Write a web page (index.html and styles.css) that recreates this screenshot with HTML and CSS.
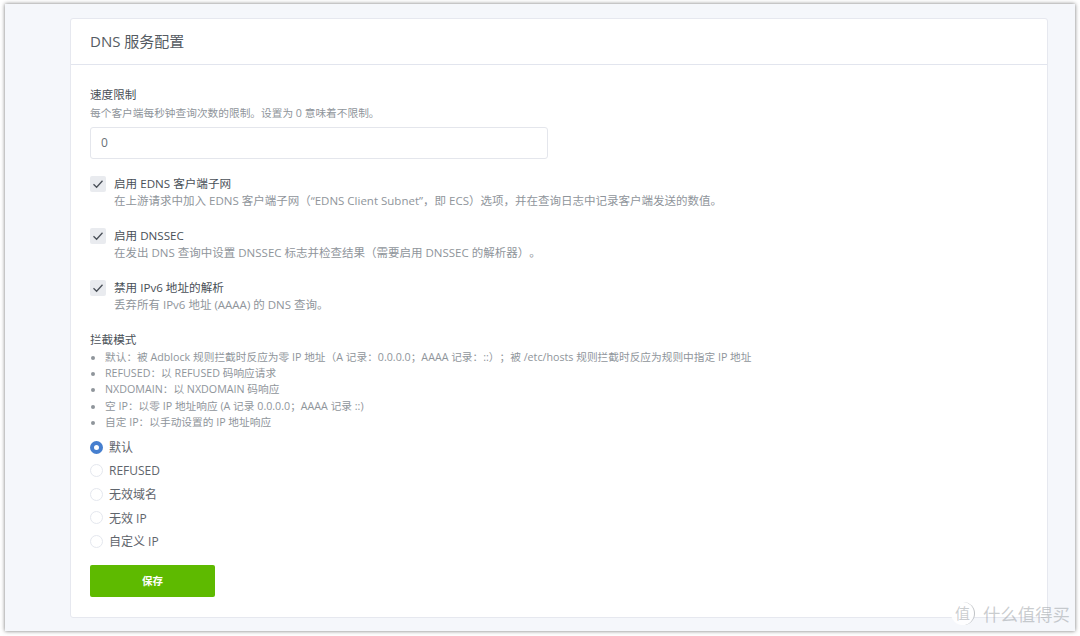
FILE: index.html
```html
<!DOCTYPE html>
<html lang="zh-CN">
<head>
<meta charset="utf-8">
<title>DNS 服务配置</title>
<link rel="stylesheet" href="styles.css">
</head>
<body>
<div class="frame">
  <section class="card">
    <h1 class="card-title">DNS 服务配置</h1>
    <form class="card-body">
      <div class="field">
        <div class="label">速度限制</div>
        <div class="desc">每个客户端每秒钟查询次数的限制。设置为 0 意味着不限制。</div>
        <div class="input">0</div>
      </div>
      <div class="check first">
        <span class="box"><svg width="12" height="12" viewBox="0 0 12 12"><path d="M1.5 6.3 4.6 9.3 10.5 2.8" fill="none" stroke="#4a5058" stroke-width="1.3"/></svg></span>
        <div>
          <div class="label">启用 EDNS 客户端子网</div>
          <div class="desc">在上游请求中加入 EDNS 客户端子网（“EDNS Client Subnet”，即 ECS）选项，并在查询日志中记录客户端发送的数值。</div>
        </div>
      </div>
      <div class="check">
        <span class="box"><svg width="12" height="12" viewBox="0 0 12 12"><path d="M1.5 6.3 4.6 9.3 10.5 2.8" fill="none" stroke="#4a5058" stroke-width="1.3"/></svg></span>
        <div>
          <div class="label">启用 DNSSEC</div>
          <div class="desc">在发出 DNS 查询中设置 DNSSEC 标志并检查结果（需要启用 DNSSEC 的解析器）。</div>
        </div>
      </div>
      <div class="check">
        <span class="box"><svg width="12" height="12" viewBox="0 0 12 12"><path d="M1.5 6.3 4.6 9.3 10.5 2.8" fill="none" stroke="#4a5058" stroke-width="1.3"/></svg></span>
        <div>
          <div class="label">禁用 IPv6 地址的解析</div>
          <div class="desc">丢弃所有 IPv6 地址 (AAAA) 的 DNS 查询。</div>
        </div>
      </div>
      <div class="mode">
        <div class="label">拦截模式</div>
        <ul class="modes">
          <li>默认：被 Adblock 规则拦截时反应为零 IP 地址（A 记录：0.0.0.0；AAAA 记录：::）；被 /etc/hosts 规则拦截时反应为规则中指定 IP 地址</li>
          <li>REFUSED：以 REFUSED 码响应请求</li>
          <li>NXDOMAIN：以 NXDOMAIN 码响应</li>
          <li>空 IP：以零 IP 地址响应 (A 记录 0.0.0.0；AAAA 记录 ::)</li>
          <li>自定 IP：以手动设置的 IP 地址响应</li>
        </ul>
      </div>
      <div class="radios">
        <div class="radio"><span class="dot on"></span>默认</div>
        <div class="radio"><span class="dot"></span>REFUSED</div>
        <div class="radio"><span class="dot"></span>无效域名</div>
        <div class="radio"><span class="dot"></span>无效 IP</div>
        <div class="radio"><span class="dot"></span>自定义 IP</div>
      </div>
      <div class="save">保存</div>
    </form>
  </section>
  <div class="watermark"><span class="mark">值</span><span>什么值得买</span></div>
</div>
</body>
</html>
```
FILE: styles.css
```css
html, body { margin: 0; padding: 0; background: #fff; }
body {
  width: 1080px;
  height: 636px;
  overflow: hidden;
  font-family: "Open Sans", "Noto Sans CJK SC", sans-serif;
  color: #495057;
  text-spacing-trim: space-all;
}
.frame {
  position: relative;
  box-sizing: border-box;
  width: 1070px;
  height: 627px;
  margin: 4px 0 0 5px;
  padding: 14px 27px 0 65px;
  background: #f5f7fb;
  box-shadow: 0 0 4px rgba(0,0,0,.55);
}
.card {
  box-sizing: border-box;
  height: 600px;
  background: #fff;
  border: 1px solid #e6e8ef;
  border-radius: 3px;
}
.card-title {
  margin: 0;
  height: 45px;
  padding-left: 19px;
  font-size: 15px;
  font-weight: 400;
  line-height: 45px;
  color: #555b62;
  border-bottom: 1px solid #e2e5ee;
}
.card-body { display: block; padding: 20px 19px 0; }
.label { font-size: 11.6px; line-height: 19px; color: #495057; }
.field .label { margin-bottom: 2px; }
.desc { font-size: 10.7px; line-height: 15px; color: #8f959b; }
.input {
  box-sizing: border-box;
  width: 458px;
  height: 32px;
  margin-top: 6px;
  padding-left: 10px;
  border: 1px solid #e4e6ec;
  border-radius: 3px;
  font-size: 12px;
  line-height: 30px;
  color: #6a7077;
}
.check { display: flex; gap: 8px; height: 34px; margin-top: 18px; }
.check.first { margin-top: 16px; }
.check .label { line-height: 17px; }
.check .desc { font-size: 11.5px; line-height: 17px; }
.box {
  flex: none;
  display: flex;
  align-items: center;
  justify-content: center;
  width: 16px;
  height: 16px;
  margin-top: 1px;
  background: #e9ebef;
  border-radius: 2px;
}
.mode { margin-top: 17px; }
.modes {
  margin: 0;
  padding: 0 0 0 15px;
  font-size: 10.7px;
  line-height: 16.2px;
  color: #8f959b;
}
.radios { margin-top: 5.5px; }
.radio {
  display: flex;
  align-items: center;
  gap: 6px;
  height: 23.5px;
  font-size: 12px;
  color: #5f656c;
}
.dot {
  box-sizing: border-box;
  width: 13px;
  height: 13px;
  border: 1px solid #e4e7ee;
  border-radius: 50%;
  background: #fff;
}
.dot.on { border: 4px solid #467fcf; }
.save {
  width: 125px;
  height: 32px;
  margin-top: 11.5px;
  background: #5eba00;
  border-radius: 2px;
  font-size: 10.5px;
  font-weight: 700;
  line-height: 32px;
  text-align: center;
  color: #fff;
}
.watermark {
  position: absolute;
  right: 5px;
  bottom: 5px;
  display: flex;
  align-items: center;
  gap: 8px;
  font-size: 17.4px;
  color: rgba(150,155,160,.5);
}
.mark {
  width: 23px;
  height: 23px;
  border-radius: 50%;
  border-right: 1.5px solid rgba(150,155,160,.6);
  background: rgba(255,255,255,.85);
  font-size: 15px;
  line-height: 23px;
  text-align: center;
}
```
